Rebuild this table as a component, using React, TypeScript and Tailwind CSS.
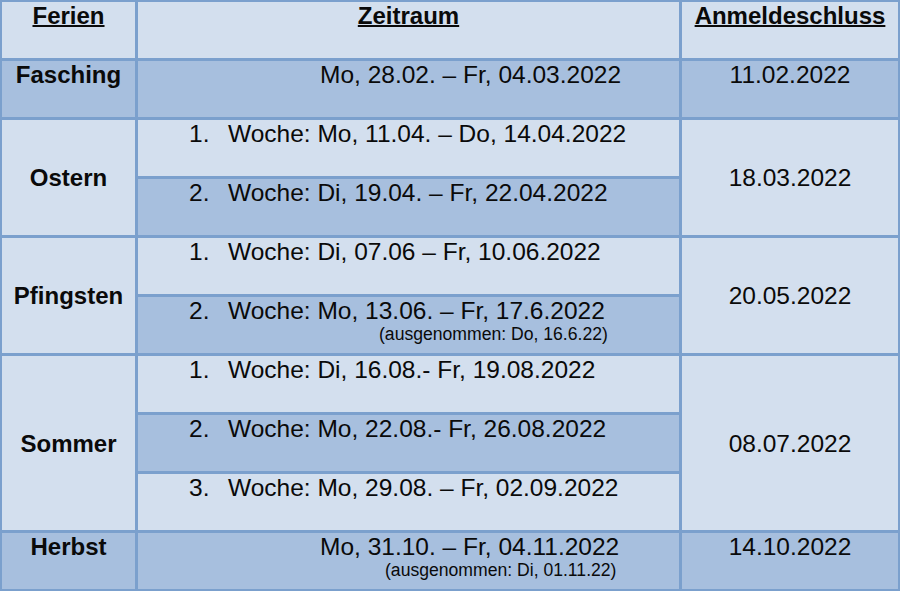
import React from "react";

const light = "bg-[#d3dfee]";
const dark = "bg-[#a7bfde]";

function Week({ n, text, note, bg }: { n: string; text: string; note?: string; bg: string }) {
  return (
    <div className={`${bg} pl-[51px]`}>
      <div className="flex leading-[27px]">
        <span className="w-[39px] shrink-0">{n}</span>
        <span className="whitespace-nowrap">{text}</span>
      </div>
      {note && (
        <div className="pl-[190px] text-[17.6px] leading-[20px] whitespace-nowrap">{note}</div>
      )}
    </div>
  );
}

export default function App() {
  return (
    <div
      className="w-[900px] h-[591px] bg-[#7ba0cd] p-[2px] text-[#0a0a0a] text-[24.5px] leading-[27px]"
      style={{ fontFamily: '"Liberation Sans", Arial, sans-serif' }}
    >
      <div className="grid grid-cols-[133px_541px_216px] grid-rows-[repeat(10,56px)] gap-[3px]">
        {/* Header */}
        <div className={`${light} text-center font-bold text-[24px]`}>
          <span className="underline decoration-2">Ferien</span>
        </div>
        <div className={`${light} text-center font-bold text-[24px]`}>
          <span className="underline decoration-2">Zeitraum</span>
        </div>
        <div className={`${light} text-center font-bold text-[24px]`}>
          <span className="underline decoration-2">Anmeldeschluss</span>
        </div>

        {/* Fasching */}
        <div className={`${dark} text-center font-bold text-[24px]`}>Fasching</div>
        <div className={`${dark} pl-[182px] whitespace-nowrap`}>Mo, 28.02. – Fr, 04.03.2022</div>
        <div className={`${dark} text-center`}>11.02.2022</div>

        {/* Ostern */}
        <div className={`${light} row-span-2 flex items-center justify-center font-bold text-[24px]`}>Ostern</div>
        <Week n="1." text="Woche: Mo, 11.04. – Do, 14.04.2022" bg={light} />
        <div className={`${light} row-span-2 flex items-center justify-center`}>18.03.2022</div>
        <Week n="2." text="Woche: Di, 19.04. – Fr, 22.04.2022" bg={dark} />

        {/* Pfingsten */}
        <div className={`${light} row-span-2 flex items-center justify-center font-bold text-[24px]`}>Pfingsten</div>
        <Week n="1." text="Woche: Di, 07.06 – Fr, 10.06.2022" bg={light} />
        <div className={`${light} row-span-2 flex items-center justify-center`}>20.05.2022</div>
        <Week
          n="2."
          text="Woche: Mo, 13.06. – Fr, 17.6.2022"
          note="(ausgenommen: Do, 16.6.22)"
          bg={dark}
        />

        {/* Sommer */}
        <div className={`${light} row-span-3 flex items-center justify-center font-bold text-[24px]`}>Sommer</div>
        <Week n="1." text="Woche: Di, 16.08.- Fr, 19.08.2022" bg={light} />
        <div className={`${light} row-span-3 flex items-center justify-center`}>08.07.2022</div>
        <Week n="2." text="Woche: Mo, 22.08.- Fr, 26.08.2022" bg={dark} />
        <Week n="3." text="Woche: Mo, 29.08. – Fr, 02.09.2022" bg={light} />

        {/* Herbst */}
        <div className={`${dark} text-center font-bold text-[24px]`}>Herbst</div>
        <div className={`${dark} pl-[182px]`}>
          <div className="whitespace-nowrap">Mo, 31.10. – Fr, 04.11.2022</div>
          <div className="pl-[65px] text-[17.6px] leading-[20px] whitespace-nowrap">(ausgenommen: Di, 01.11.22)</div>
        </div>
        <div className={`${dark} text-center`}>14.10.2022</div>
      </div>
    </div>
  );
}
